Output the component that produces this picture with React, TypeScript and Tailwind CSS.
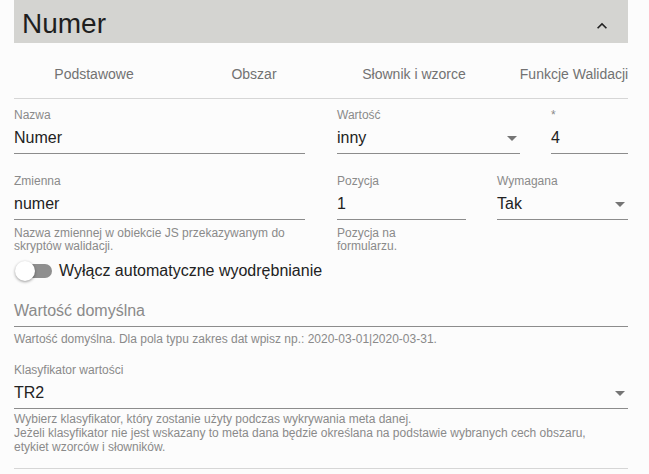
import React from "react"

function Caret() {
  return (
    <svg width="10" height="5" viewBox="0 0 10 5" className="shrink-0 mr-[3px]">
      <path d="M0 0l5 5 5-5z" fill="#757575" />
    </svg>
  )
}

function Field({
  label,
  value,
  select,
  width,
  className = "",
}: {
  label?: string
  value: string
  select?: boolean
  width: string
  className?: string
}) {
  return (
    <div className={`${width} ${className} shrink-0`}>
      <div className="h-[14px] text-[12px] leading-[14px] text-[#8a8a8a]">{label}</div>
      <div className="mt-[4px] box-content flex h-[24px] items-center justify-between border-b border-[#8c8c8c] pb-[3px]">
        <span className="text-[16px] leading-[24px] text-[#222]">{value}</span>
        {select && <Caret />}
      </div>
    </div>
  )
}

export default function App() {
  return (
    <div className="min-h-[474px] w-[649px] bg-[#fcfcfc] font-['Liberation_Sans',Arial,sans-serif]">
      <div className="ml-[14px] w-[614px]">
        {/* header */}
        <div className="flex h-[43px] items-center justify-between bg-[#d4d4d1] pl-[8px] pr-[16px]">
          <h1 className="pt-[4px] text-[28px] leading-[32px] text-[#1e1e1e]">Numer</h1>
          <svg width="20" height="20" viewBox="0 0 24 24" className="mt-[9px]">
            <path d="M12 8l-6 6 1.41 1.41L12 10.83l4.59 4.58L18 14z" fill="#222" />
          </svg>
        </div>

        {/* tabs */}
        <div className="mt-2 flex h-12 overflow-hidden border-b border-[#d6d6d6]">
          {["Podstawowe", "Obszar", "Słownik i wzorce", "Funkcje Walidacji"].map((t) => (
            <div key={t} className="flex w-[160px] shrink-0 items-center justify-center whitespace-nowrap text-[14px] text-[#727272]">
              {t}
            </div>
          ))}
        </div>

        {/* row 1 */}
        <div className="flex pt-[9px]">
          <Field label="Nazwa" value="Numer" width="w-[291px]" />
          <Field label="Wartość" value="inny" select width="w-[183px]" className="ml-[32px]" />
          <Field label="*" value="4" width="w-[77px]" className="ml-[31px]" />
        </div>

        {/* row 2 */}
        <div className="mt-[20px] flex">
          <div className="w-[291px] shrink-0">
            <Field label="Zmienna" value="numer" width="w-full" />
            <p className="mt-[7px] text-[12px] leading-[13px] text-[#8a8a8a]">
              Nazwa zmiennej w obiekcie JS przekazywanym do
              <br />
              skryptów walidacji.
            </p>
          </div>
          <div className="ml-[32px] w-[129px] shrink-0">
            <Field label="Pozycja" value="1" width="w-full" />
            <p className="mt-[7px] text-[12px] leading-[13px] text-[#8a8a8a]">
              Pozycja na
              <br />
              formularzu.
            </p>
          </div>
          <Field label="Wymagana" value="Tak" select width="w-[131px]" className="ml-[31px]" />
        </div>

        {/* switch */}
        <div className="flex h-[36px] items-center">
          <div className="relative ml-[1px] h-[20px] w-[38px]">
            <div className="absolute left-[3px] top-[3px] h-[14px] w-[34px] rounded-full bg-[#8f8f8f]" />
            <div className="absolute left-0 top-0 h-[20px] w-[20px] rounded-full bg-white shadow-[0_1px_3px_rgba(0,0,0,0.4)]" />
          </div>
          <span className="ml-[6px] text-[16px] text-[#222]">Wyłącz automatyczne wyodrębnianie</span>
        </div>

        {/* default value */}
        <div className="mt-[10px]">
          <div className="box-content h-[24px] border-b border-[#8c8c8c] pb-[3px] text-[16px] leading-[24px] text-[#8a8a8a]">
            Wartość domyślna
          </div>
          <p className="mt-[5px] text-[12px] leading-[14px] text-[#8a8a8a]">
            Wartość domyślna. Dla pola typu zakres dat wpisz np.: 2020-03-01|2020-03-31.
          </p>
        </div>

        {/* classifier */}
        <div className="mt-[17px]">
          <Field label="Klasyfikator wartości" value="TR2" select width="w-full" />
          <p className="mt-[3px] text-[12px] leading-[14px] text-[#8a8a8a]">
            Wybierz klasyfikator, który zostanie użyty podczas wykrywania meta danej.
            <br />
            Jeżeli klasyfikator nie jest wskazany to meta dana będzie określana na podstawie wybranych cech obszaru,
            <br />
            etykiet wzorców i słowników.
          </p>
        </div>

        <div className="mt-[14px] border-b border-[#d6d6d6]" />
      </div>
    </div>
  )
}
